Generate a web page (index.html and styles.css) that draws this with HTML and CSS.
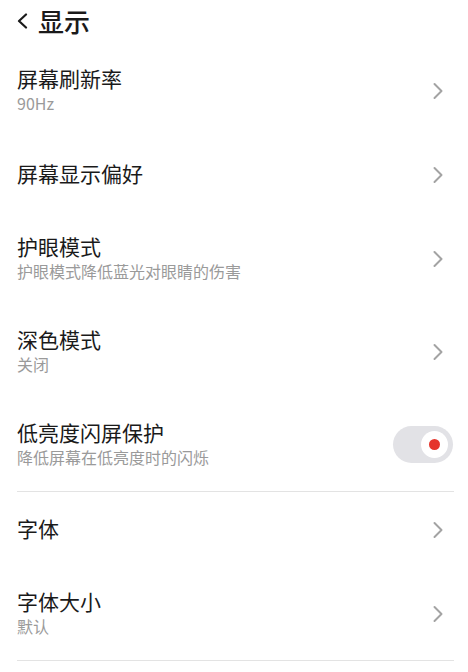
FILE: index.html
```html
<!DOCTYPE html>
<html lang="zh-CN">
<head>
<meta charset="utf-8">
<title>显示</title>
<link rel="stylesheet" href="styles.css">
</head>
<body>
<div class="page">
  <header class="header">
    <svg class="back" width="11" height="16" viewBox="0 0 11 16"><path d="M9 1.5 L2 8 L9 14.5" fill="none" stroke="#1a1a1a" stroke-width="2.2" stroke-linecap="round" stroke-linejoin="round"/></svg>
    <h1 class="title">显示</h1>
  </header>
  <div class="list">
    <div class="row">
      <div class="text"><div class="name">屏幕刷新率</div><div class="sub">90Hz</div></div>
      <svg class="chev" width="12" height="18" viewBox="0 0 12 18"><path d="M2.5 2 L9.5 9 L2.5 16" fill="none" stroke="#a3a3a3" stroke-width="2" stroke-linecap="round" stroke-linejoin="round"/></svg>
    </div>
    <div class="row">
      <div class="text"><div class="name">屏幕显示偏好</div></div>
      <svg class="chev" width="12" height="18" viewBox="0 0 12 18"><path d="M2.5 2 L9.5 9 L2.5 16" fill="none" stroke="#a3a3a3" stroke-width="2" stroke-linecap="round" stroke-linejoin="round"/></svg>
    </div>
    <div class="row">
      <div class="text"><div class="name">护眼模式</div><div class="sub">护眼模式降低蓝光对眼睛的伤害</div></div>
      <svg class="chev" width="12" height="18" viewBox="0 0 12 18"><path d="M2.5 2 L9.5 9 L2.5 16" fill="none" stroke="#a3a3a3" stroke-width="2" stroke-linecap="round" stroke-linejoin="round"/></svg>
    </div>
    <div class="row">
      <div class="text"><div class="name">深色模式</div><div class="sub">关闭</div></div>
      <svg class="chev" width="12" height="18" viewBox="0 0 12 18"><path d="M2.5 2 L9.5 9 L2.5 16" fill="none" stroke="#a3a3a3" stroke-width="2" stroke-linecap="round" stroke-linejoin="round"/></svg>
    </div>
    <div class="row">
      <div class="text"><div class="name">低亮度闪屏保护</div><div class="sub">降低屏幕在低亮度时的闪烁</div></div>
      <div class="toggle"><div class="knob"><div class="dot"></div></div></div>
    </div>
  </div>
  <div class="divider"></div>
  <div class="list">
    <div class="row">
      <div class="text"><div class="name">字体</div></div>
      <svg class="chev" width="12" height="18" viewBox="0 0 12 18"><path d="M2.5 2 L9.5 9 L2.5 16" fill="none" stroke="#a3a3a3" stroke-width="2" stroke-linecap="round" stroke-linejoin="round"/></svg>
    </div>
    <div class="row">
      <div class="text"><div class="name">字体大小</div><div class="sub">默认</div></div>
      <svg class="chev" width="12" height="18" viewBox="0 0 12 18"><path d="M2.5 2 L9.5 9 L2.5 16" fill="none" stroke="#a3a3a3" stroke-width="2" stroke-linecap="round" stroke-linejoin="round"/></svg>
    </div>
  </div>
  <div class="divider"></div>
</div>
</body>
</html>
```

FILE: styles.css
```css
* { box-sizing: border-box; }
html, body { margin: 0; padding: 0; background: #fff; }
body {
  font-family: "Noto Sans CJK SC", "Noto Sans", sans-serif;
  color: #1a1a1a;
  width: 468px;
  height: 672px;
  overflow: hidden;
}
.page { padding: 0 14px 0 17px; }
.header {
  height: 44px;
  display: flex;
  align-items: center;
  padding-bottom: 2px;
}
.back { margin-right: 10px; flex: none; }
.title {
  margin: 0;
  font-size: 26px;
  font-weight: 500;
  line-height: 34px;
}
.row {
  display: flex;
  align-items: center;
  justify-content: space-between;
  min-height: 75px;
  padding: 19.5px 0;
}
.text { display: flex; flex-direction: column; margin-bottom: 4px; }
.name { font-size: 21px; line-height: 28px; }
.sub { font-size: 16px; line-height: 22px; color: #9a9a9a; }
.chev { flex: none; margin-right: 10px; }
.toggle {
  width: 60px;
  height: 37px;
  border-radius: 18.5px;
  background: #e2e2e6;
  display: flex;
  align-items: center;
  justify-content: flex-end;
  padding-right: 5px;
  margin-right: 1px;
}
.knob {
  width: 27px;
  height: 27px;
  border-radius: 50%;
  background: #fff;
  display: flex;
  align-items: center;
  justify-content: center;
}
.dot {
  width: 11px;
  height: 11px;
  border-radius: 50%;
  background: #e5342b;
}
.divider { height: 1px; background: #e3e3e3; }
```
